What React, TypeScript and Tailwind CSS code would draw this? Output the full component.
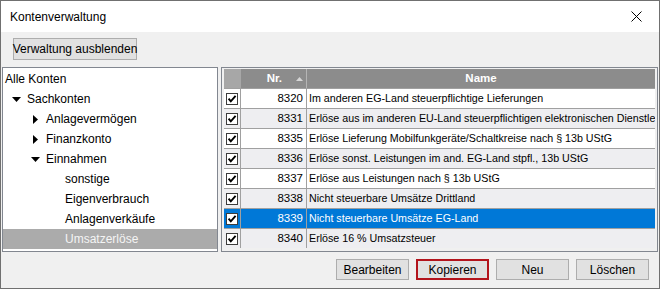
import React from 'react'

type Row = { nr: string; name: string; selected?: boolean }

const rows: Row[] = [
  { nr: '8320', name: 'Im anderen EG-Land steuerpflichtige Lieferungen' },
  { nr: '8331', name: 'Erlöse aus im anderen EU-Land steuerpflichtigen elektronischen Dienstleistungen' },
  { nr: '8335', name: 'Erlöse Lieferung Mobilfunkgeräte/Schaltkreise nach § 13b UStG' },
  { nr: '8336', name: 'Erlöse sonst. Leistungen im and. EG-Land stpfl., 13b UStG' },
  { nr: '8337', name: 'Erlöse aus Leistungen nach § 13b UStG' },
  { nr: '8338', name: 'Nicht steuerbare Umsätze Drittland' },
  { nr: '8339', name: 'Nicht steuerbare Umsätze EG-Land', selected: true },
  { nr: '8340', name: 'Erlöse 16 % Umsatzsteuer' },
]

type Node = { label: string; level: number; toggle?: 'open' | 'closed'; selected?: boolean }

const tree: Node[] = [
  { label: 'Alle Konten', level: 0 },
  { label: 'Sachkonten', level: 1, toggle: 'open' },
  { label: 'Anlagevermögen', level: 2, toggle: 'closed' },
  { label: 'Finanzkonto', level: 2, toggle: 'closed' },
  { label: 'Einnahmen', level: 2, toggle: 'open' },
  { label: 'sonstige', level: 3 },
  { label: 'Eigenverbrauch', level: 3 },
  { label: 'Anlagenverkäufe', level: 3 },
  { label: 'Umsatzerlöse', level: 3, selected: true },
]

function Checkbox() {
  return (
    <svg width="12" height="12" viewBox="0 0 12 12" aria-hidden="true">
      <rect x="0.5" y="0.5" width="11" height="11" fill="#fff" stroke="#3c3c3c" />
      <path d="M2.6 5.6 L4.8 8.3 L9.6 2.8" stroke="#000" strokeWidth="1.9" fill="none" />
    </svg>
  )
}

function Toggle({ state }: { state: 'open' | 'closed' }) {
  return (
    <span className="flex h-[20px] w-[16px] items-center justify-center">
      {state === 'open' ? (
        <svg width="9" height="5" viewBox="0 0 9 5" aria-hidden="true">
          <path d="M0 0 H9 L4.5 5 Z" fill="#000" />
        </svg>
      ) : (
        <svg width="5" height="9" viewBox="0 0 5 9" aria-hidden="true">
          <path d="M0 0 L5 4.5 L0 9 Z" fill="#000" />
        </svg>
      )}
    </span>
  )
}

function WinButton({ label, active }: { label: string; active?: boolean }) {
  return (
    <button
      type="button"
      className={`flex h-[21px] w-[73px] items-center justify-center bg-[#e1e1e1] text-[12px] text-black ${
        active ? 'border-2 border-[#b3141c]' : 'border border-[#adadad]'
      }`}
    >
      {label}
    </button>
  )
}

export default function App() {
  return (
    <div
      className="flex h-[289px] w-[660px] flex-col overflow-hidden border border-[#707070] bg-[#f0f0f0] text-black"
      style={{ fontFamily: '"Liberation Sans", Arial, sans-serif' }}
    >
      {/* Title bar */}
      <div className="flex h-[31px] shrink-0 items-center justify-between bg-white pl-[9px] pr-[17px]">
        <span className="text-[12px]">Kontenverwaltung</span>
        <svg width="11" height="11" viewBox="0 0 11 11" aria-hidden="true">
          <path d="M0.5 0.5 L10.5 10.5 M10.5 0.5 L0.5 10.5" stroke="#000" strokeWidth="1" />
        </svg>
      </div>

      {/* Toolbar */}
      <div className="flex pl-[12px] pt-[6px]">
        <button
          type="button"
          className="flex h-[22px] w-[124px] items-center justify-center whitespace-nowrap border border-[#adadad] bg-[#e1e1e1] text-[12px]"
        >
          Verwaltung ausblenden
        </button>
      </div>

      {/* Main */}
      <div className="mt-[7px] flex h-[185px] gap-[3px] pl-[1px] pr-[1px]">
        {/* Tree */}
        <div className="w-[216px] shrink-0 border border-[#828790] bg-white pt-[1px] text-[12px]">
          {tree.map(n => (
            <div
              key={n.label}
              className={`flex h-[20px] items-center ${n.selected ? 'bg-[#ababab] text-[#f4f4f4]' : ''}`}
              style={{ paddingLeft: n.level === 0 ? 2 : 5 + (n.level - 1) * 19 }}
            >
              {n.level > 0 && (n.toggle ? <Toggle state={n.toggle} /> : <span className="w-[16px]" />)}
              <span className={n.level > 0 ? 'pl-[3px]' : ''}>{n.label}</span>
            </div>
          ))}
        </div>

        {/* Table */}
        <div className="min-w-0 flex-1 border border-[#828790] bg-[#f0f0f0] pl-[2px] pr-[2px] pt-[1px] text-[10.7px]">
          <div className="flex h-[19px] text-[11.5px] font-bold text-white">
            <div className="w-[17px] shrink-0 bg-[#a7a7a7]" />
            <div className="flex w-[66px] shrink-0 items-center justify-end border-r border-[#b5b5b5] bg-[#8c8c8c] pr-[3px]">
              <span>Nr.</span>
              <svg className="ml-[14px]" width="7" height="4" viewBox="0 0 7 4" aria-hidden="true">
                <path d="M0 4 L3.5 0 L7 4 Z" fill="#d6d6d6" />
              </svg>
            </div>
            <div className="flex flex-1 items-center justify-center bg-[#8c8c8c]">Name</div>
          </div>
          {rows.map((r, i) => (
            <div
              key={r.nr}
              className={`flex h-[20px] border-t border-[#a0a0a0] ${
                r.selected ? 'bg-[#0078d7] text-white' : i % 2 === 1 ? 'bg-[#eeeef1]' : 'bg-white'
              }`}
            >
              <div className="flex w-[17px] shrink-0 items-center justify-center border-r border-[#a0a0a0]">
                <Checkbox />
              </div>
              <div className="flex w-[66px] shrink-0 items-center justify-end border-r border-[#a0a0a0] pr-[3px] text-[11.5px]">
                {r.nr}
              </div>
              <div className="flex min-w-0 flex-1 items-center overflow-hidden whitespace-nowrap pl-[2px] text-[10.7px]">
                {r.name}
              </div>
            </div>
          ))}
        </div>
      </div>

      {/* Footer */}
      <div className="mt-[7px] flex justify-end gap-[7px] pr-[10px]">
        <WinButton label="Bearbeiten" />
        <WinButton label="Kopieren" active />
        <WinButton label="Neu" />
        <WinButton label="Löschen" />
      </div>
    </div>
  )
}
